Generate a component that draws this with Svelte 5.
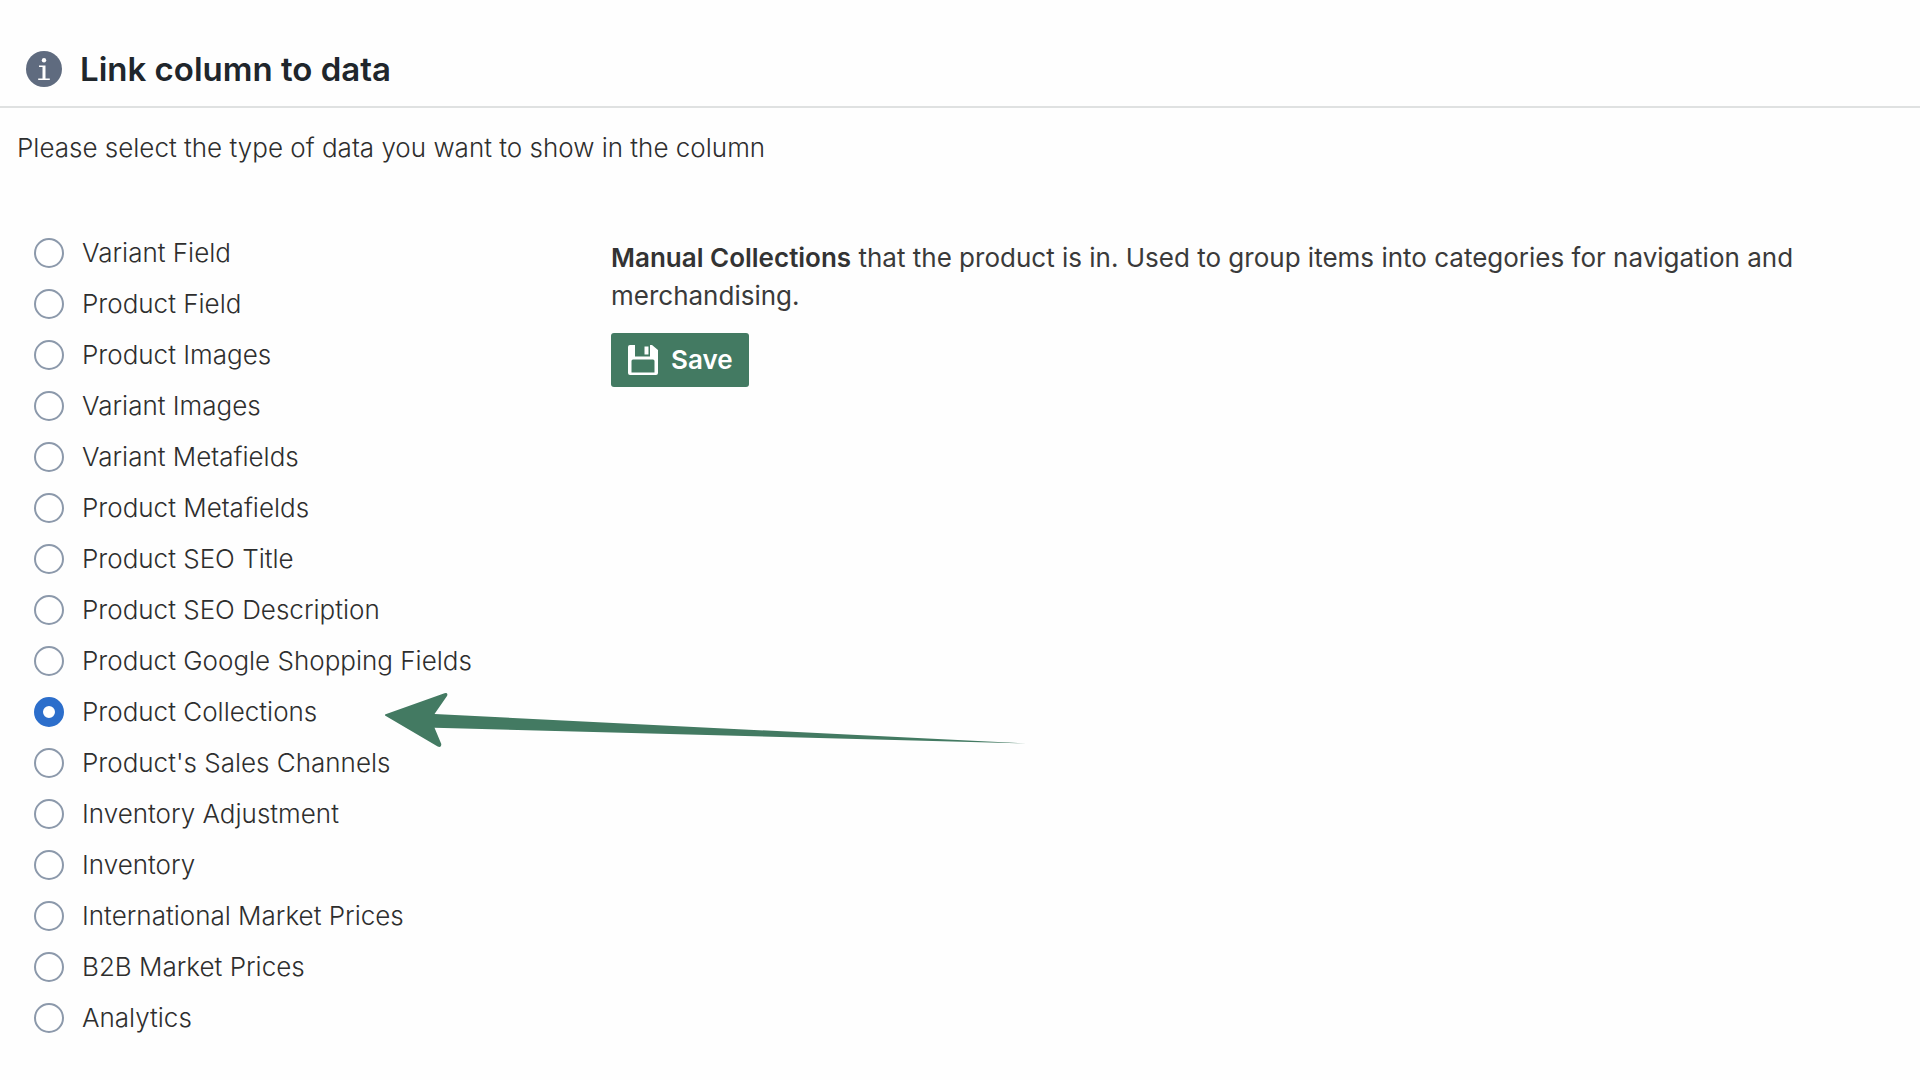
<script>
	let selected = 'Product Collections';

	const options = [
		'Variant Field',
		'Product Field',
		'Product Images',
		'Variant Images',
		'Variant Metafields',
		'Product Metafields',
		'Product SEO Title',
		'Product SEO Description',
		'Product Google Shopping Fields',
		'Product Collections',
		"Product's Sales Channels",
		'Inventory Adjustment',
		'Inventory',
		'International Market Prices',
		'B2B Market Prices',
		'Analytics'
	];
</script>

<main>
	<header>
		<svg class="info" viewBox="0 0 36 36" aria-hidden="true">
			<circle cx="18" cy="18" r="18" fill="#5f6b7f" />
			<circle cx="18" cy="9.3" r="2.2" fill="#fff" />
			<path d="M13 14.500h6.500v13h4.300v1.500H12.200v-1.500h4.300V16H13z" fill="#fff" />
		</svg>
		<h1>Link column to data</h1>
	</header>

	<p class="intro">Please select the type of data you want to show in the column</p>

	<div class="content">
		<!-- data types -->
		<div class="options" role="radiogroup" aria-label="Type of data">
			{#each options as option}
				<div class="row">
					<label>
						<input type="radio" name="type" value={option} bind:group={selected} />
						{option}
					</label>
					{#if option === 'Product Collections'}
						<svg class="arrow" viewBox="0 0 642 56" aria-hidden="true">
							<path
								d="M1.6 22.2 60.5 1.2Q64.5 0.5 63 4L50.5 22 642 51.5 50.5 35.7 57.3 52Q57.3 56 53.7 54.6L1.4 23.8Q0.4 22.8 1.6 22.2z"
								fill="#437a62"
							/>
						</svg>
					{/if}
				</div>
			{/each}
		</div>

		<!-- description of the chosen type -->
		<div class="details">
			<p>
				<strong>Manual Collections</strong> that the product is in. Used to group items into categories
				for navigation and merchandising.
			</p>
			<button type="button">
				<svg viewBox="0 0 30 30" aria-hidden="true">
					<path
						fill="#fff"
						fill-rule="evenodd"
						d="M2 0H7V11.5H22V0H24L30 5V28Q30 30 28 30H2Q0 30 0 28V2Q0 0 2 0zM5 14.5Q3.500 14.500 3.500 16V27.500H26.500V16Q26.500 14.500 25 14.500z"
					/>
					<path fill="#fff" d="M16.500 1.500h4v8h-4z" />
				</svg>
				Save
			</button>
		</div>
	</div>
</main>

<style>
	:global(body) {
		margin: 0;
		background: #fefefe;
	}
	main {
		font-family: Inter, 'Liberation Sans', sans-serif;
		font-size: 26px;
		font-weight: 300;
		color: #2e2e2e;
	}
	header {
		display: flex;
		align-items: center;
		gap: 18px;
		padding: 32px 26px 0;
		height: 74px;
		border-bottom: 2px solid #dfe1e1;
	}
	.info {
		width: 36px;
		height: 36px;
	}
	h1 {
		margin: 0;
		font-size: 33px;
		font-weight: 600;
		color: #20262c;
	}
	p {
		margin: 0;
	}
	.intro {
		padding: 21px 17px 0;
		line-height: 38px;
	}
	.content {
		display: flex;
		padding: 60px 34px 0;
	}
	.options {
		flex: 0 0 577px;
	}
	.row {
		position: relative;
	}
	label {
		display: flex;
		align-items: center;
		gap: 18px;
		height: 51px;
	}
	input {
		appearance: none;
		flex: none;
		width: 30px;
		height: 30px;
		margin: 0;
		border: 2px solid #8c99ab;
		border-radius: 50%;
		background: #fff;
	}
	input:checked {
		border: 9px solid #2c6ecb;
	}
	.arrow {
		position: absolute;
		left: 350px;
		top: 6px;
		width: 642px;
		height: 56px;
		pointer-events: none;
	}
	.details {
		flex: 1;
		padding-top: 12px;
		line-height: 38px;
		font-weight: 400;
		color: #3a3a3a;
	}
	.details p {
		max-width: 1200px;
	}
	strong {
		font-weight: 600;
		color: #333;
	}
	button {
		display: flex;
		align-items: center;
		gap: 13px;
		height: 54px;
		margin-top: 18px;
		padding: 0 16px 0 17px;
		border: none;
		border-radius: 3px;
		background: #437a62;
		color: #fff;
		font: inherit;
		font-weight: 600;
		cursor: pointer;
	}
	button svg {
		width: 30px;
		height: 30px;
	}
</style>
